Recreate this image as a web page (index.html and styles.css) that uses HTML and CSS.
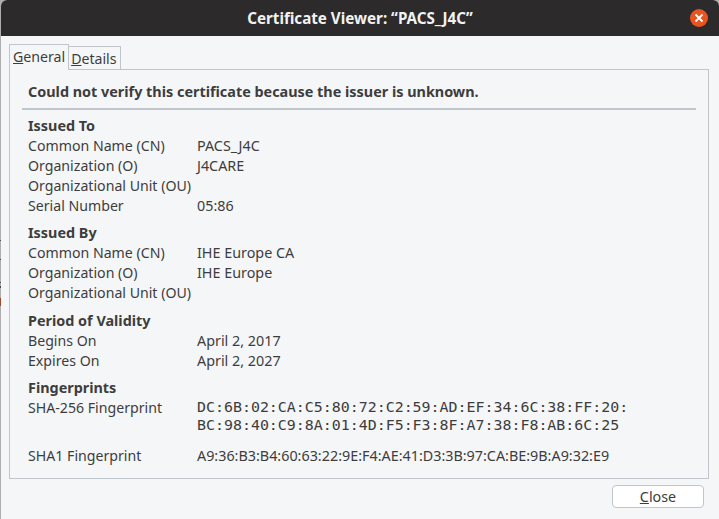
FILE: index.html
```html
<!DOCTYPE html>
<html>
<head>
  <meta charset="utf-8">
  <title>Certificate Viewer</title>
  <link rel="stylesheet" href="styles.css">
</head>
<body>

  <div class="window">
    <div class="titlebar">
      <span class="title">Certificate Viewer: “PACS_J4C”</span>
      <span class="close-x">
        <svg width="18" height="18" viewBox="0 0 18 18">
          <circle cx="9" cy="9" r="9" fill="#e95420"/>
          <path d="M5.5 5.5l7 7M12.5 5.5l-7 7" stroke="#fff" stroke-width="1.8" fill="none"/>
        </svg>
      </span>
    </div>

    <div class="content">
      <div class="tabs">
        <div class="tab active"><u>G</u>eneral</div>
        <div class="tab"><u>D</u>etails</div>
      </div>

      <div class="panel">
        <div class="status">Could not verify this certificate because the issuer is unknown.</div>
        <div class="rule"></div>

        <div class="section first">
          <h3>Issued To</h3>
          <div class="row"><span class="label">Common Name (CN)</span><span class="value">PACS_J4C</span></div>
          <div class="row"><span class="label">Organization (O)</span><span class="value">J4CARE</span></div>
          <div class="row"><span class="label">Organizational Unit (OU)</span></div>
          <div class="row"><span class="label">Serial Number</span><span class="value">05:86</span></div>
        </div>

        <div class="section">
          <h3>Issued By</h3>
          <div class="row"><span class="label">Common Name (CN)</span><span class="value">IHE Europe CA</span></div>
          <div class="row"><span class="label">Organization (O)</span><span class="value">IHE Europe</span></div>
          <div class="row"><span class="label">Organizational Unit (OU)</span></div>
        </div>

        <div class="section">
          <h3>Period of Validity</h3>
          <div class="row"><span class="label">Begins On</span><span class="value">April 2, 2017</span></div>
          <div class="row"><span class="label">Expires On</span><span class="value">April 2, 2027</span></div>
        </div>

        <div class="section">
          <h3>Fingerprints</h3>
          <div class="row tall"><span class="label">SHA-256 Fingerprint</span><span class="value mono">DC:6B:02:CA:C5:80:72:C2:59:AD:EF:34:6C:38:FF:20:<br>BC:98:40:C9:8A:01:4D:F5:F3:8F:A7:38:F8:AB:6C:25</span></div>
          <div class="row"><span class="label">SHA1 Fingerprint</span><span class="value">A9:36:B3:B4:60:63:22:9E:F4:AE:41:D3:3B:97:CA:BE:9B:A9:32:E9</span></div>
        </div>
      </div>

      <div class="actions">
        <button class="btn"><u>C</u>lose</button>
      </div>
    </div>
  </div>

</body>
</html>
```

FILE: styles.css
```css
html, body {
  margin: 0;
  height: 100%;
}

body {
  background-color: #aeaeae;
  /* bits of the window behind, showing down the left edge */
  background-image: linear-gradient(to bottom,
    transparent 240px, #4a4a4a 240px, #4a4a4a 241px,
    transparent 241px, transparent 259px, #4a4a4a 259px, #4a4a4a 260px,
    transparent 260px, transparent 282px, #4a4a4a 282px, #4a4a4a 283px,
    transparent 283px, transparent 286px, #4a4a4a 286px, #4a4a4a 288px,
    transparent 288px, transparent 298px, #9a4a2a 298px, #9a4a2a 306px,
    transparent 306px);
  background-repeat: no-repeat;
  background-size: 1px 519px;
  font-family: 'Noto Sans', 'Open Sans', sans-serif;
  font-size: 14.15px;
  color: #3d3d3d;
  overflow: hidden;
}

.window {
  height: 519px;
  margin-left: 1px;
  display: flex;
  flex-direction: column;
  border-radius: 6px 6px 0 0;
  overflow: hidden;
  background: #f5f6f7;
}

.titlebar {
  height: 36px;
  flex: none;
  display: flex;
  align-items: center;
  justify-content: center;
  position: relative;
  background: #2c2a2b;
}

.title {
  color: #f2f2f2;
  font-weight: 700;
  font-size: 15.2px;
}

.close-x {
  position: absolute;
  right: 11px;
  top: 9px;
  width: 18px;
  height: 18px;
}

.content {
  flex: 1;
  padding: 8px 10px 0 8px;
}

.tabs {
  display: flex;
  align-items: flex-end;
  height: 25px;
  position: relative;
}

.tab {
  height: 22px;
  padding: 0 3px 0 2px;
  border: 1px solid #c0c5cb;
  border-bottom: none;
  border-left: none;
  line-height: 23px;
}

.tab.active {
  height: 25px;
  line-height: 24px;
  padding: 0 3px;
  margin-bottom: -1px;
  border-left: 1px solid #c0c5cb;
  background: #f5f6f7;
  position: relative;
  z-index: 1;
}

.panel {
  height: 410px;
  box-sizing: border-box;
  border: 1px solid #c0c5cb;
  padding: 0 12px;
}

.status {
  font-weight: 700;
  font-size: 14.4px;
  padding: 9px 6px 0;
  line-height: 26px;
  height: 29px;
}

.rule {
  height: 2px;
  background: #c0c5cb;
}

.section {
  margin: 0 6px;
  padding-top: 7.4px;
}

.section.first {
  padding-top: 6px;
}

h3 {
  margin: 0;
  font-size: 14.4px;
  font-weight: 700;
  line-height: 20px;
}

.row {
  display: flex;
  line-height: 20px;
}

.row.tall {
  margin-bottom: 12px;
}

.label {
  width: 169px;
  flex: none;
  white-space: nowrap;
}

.value {
  font-size: 14.35px;
  white-space: nowrap;
}

.value.mono {
  font-family: 'DejaVu Sans Mono', monospace;
  font-size: 14.93px;
  line-height: 18px;
}

.actions {
  display: flex;
  justify-content: flex-end;
  padding: 6px 5px 0 0;
}

.btn {
  width: 92px;
  height: 23px;
  padding: 0;
  background: #fff;
  border: 1px solid #c0c5cb;
  border-radius: 4px;
  font-family: inherit;
  font-size: 14.3px;
  line-height: 20px;
  color: #3d3d3d;
}
```
